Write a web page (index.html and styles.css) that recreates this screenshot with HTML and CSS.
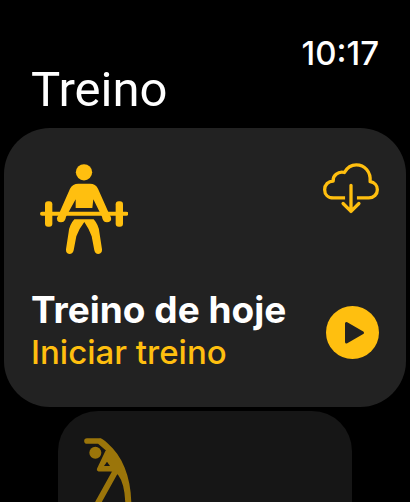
FILE: index.html
```html
<!DOCTYPE html>
<html lang="pt">
<head>
<meta charset="utf-8">
<meta name="viewport" content="width=device-width, initial-scale=1">
<title>Treino</title>
<link rel="stylesheet" href="styles.css">
</head>
<body>
<header class="top">
  <time class="clock">10:17</time>
  <h1 class="title">Treino</h1>
</header>
<main class="list">
  <section class="card">
    <div class="row row-icons">
      <svg class="lifter" viewBox="30 29 264 270" aria-hidden="true">
        <g fill="#ffbf0f">
          <circle cx="162" cy="54" r="24.500"/>
          <path d="M145 88H180Q197 88 204 103L239 182Q246 192 242 199Q236 205 226 203Q218 200 216 187L190 135L187 161H137V135L108 187Q106 200 98 203Q87 205 82 199Q78 191 85 183L120 103Q128 88 145 88Z"/>
          <path d="M133 195H191Q206 212 208 233L216 285Q217 298 205 299Q195 299 193 288L185 246Q177 223 163 203Q147 223 139 246L131 288Q129 299 118 299Q107 298 108 285L116 233Q118 212 133 195Z"/>
          <rect x="45" y="141" width="22" height="76" rx="9"/>
          <rect x="257" y="141" width="22" height="76" rx="9"/>
        </g>
        <path d="M36 178H289" stroke="#ffbf0f" stroke-width="12" stroke-linecap="round"/>
      </svg>
      <button class="icon-button" type="button" aria-label="Baixar">
        <svg class="cloud" viewBox="38 38 170 153" fill="none" stroke="#ffbf0f" stroke-width="10" stroke-linecap="round" stroke-linejoin="round" aria-hidden="true">
          <path stroke-linecap="butt" d="M105 143H70C53 143 43 132 43 118C43 103 54 92 69 92C67 77 83 61 103 66C112 50 124 43 139 43C164 43 184 63 181 94C194 96 203 106 203 118C203 132 192 143 177 143H141"/>
          <path d="M123 105V184M99 160L123 184L147 160"/>
        </svg>
      </button>
    </div>
    <div class="row row-text">
      <div>
        <h2 class="name">Treino de hoje</h2>
        <p class="action">Iniciar treino</p>
      </div>
      <button class="icon-button" type="button" aria-label="Iniciar">
        <svg class="play" viewBox="0 0 53 53" aria-hidden="true">
          <circle cx="26.500" cy="26.500" r="26.500" fill="#ffbf0f"/>
          <path d="M20.500 17.500V36L36.500 26.700Z" fill="#222" stroke="#222" stroke-width="3" stroke-linejoin="round"/>
        </svg>
      </button>
    </div>
  </section>
  <section class="card card-next">
    <svg class="stretcher" viewBox="104 113 144 207" aria-hidden="true">
      <g fill="none" stroke="#9b750a" stroke-linecap="round" stroke-linejoin="round">
        <path stroke-width="17" d="M113 122H150L172 141"/>
        <path stroke-width="13" d="M174 155L149 207H200"/>
        <path stroke-width="18" d="M200 210L150 300L142 316"/>
      </g>
      <path fill="#9b750a" d="M150 114Q160 114 174 128C220 168 245 230 246 310Q236 320 228 310Q226 250 207 225L196 214L149 207L174 153Z"/>
      <circle cx="138" cy="157" r="18" fill="#9b750a"/>
      <path fill="#161616" d="M173 184L182 197H164Z"/>
    </svg>
  </section>
</main>
</body>
</html>
```
FILE: styles.css
```css
* {
  box-sizing: border-box;
}

body {
  display: flex;
  flex-direction: column;
  margin: 0;
  height: 100vh;
  background: #000;
  color: #fff;
  font-family: Roboto, sans-serif;
}

h1,
h2,
p {
  margin: 0;
  font-weight: 400;
}

.top {
  display: flex;
  flex: none;
  flex-direction: column;
  padding: 36px 31px 8px;
}

.clock {
  align-self: flex-end;
  font: 500 33px/34px Inter, sans-serif;
}

.title {
  margin-top: -10px;
  font-size: 49px;
  line-height: 60px;
}

.list {
  display: flex;
  flex: 1;
  flex-direction: column;
  gap: 4px;
  min-height: 0;
  padding: 0 4px;
}

.card {
  flex: none;
  padding: 35px 27px 33px;
  border-radius: 46px;
  background: #222;
}

.row {
  display: flex;
  justify-content: space-between;
}

.row-icons {
  align-items: flex-start;
}

.row-text {
  align-items: center;
  margin-top: 35px;
}

.icon-button {
  display: block;
  flex: none;
  padding: 0;
  border: 0;
  background: none;
}

svg {
  display: block;
}

.lifter {
  width: 88px;
  height: 92px;
  margin-left: 9px;
}

.cloud {
  width: 56px;
  height: 51px;
}

.play {
  width: 53px;
  height: 53px;
}

.name {
  font: 700 37px/40px Inter, sans-serif;
}

.action {
  color: #ffbf0f;
  font: 500 33px/44px Inter, sans-serif;
}

.card.card-next {
  flex: 1;
  min-height: 0;
  margin: 0 54px;
  padding: 27px 26px 0;
  border-radius: 40px 40px 0 0;
  background: #161616;
  overflow: hidden;
}

.stretcher {
  width: 48px;
  height: 69px;
}
```
